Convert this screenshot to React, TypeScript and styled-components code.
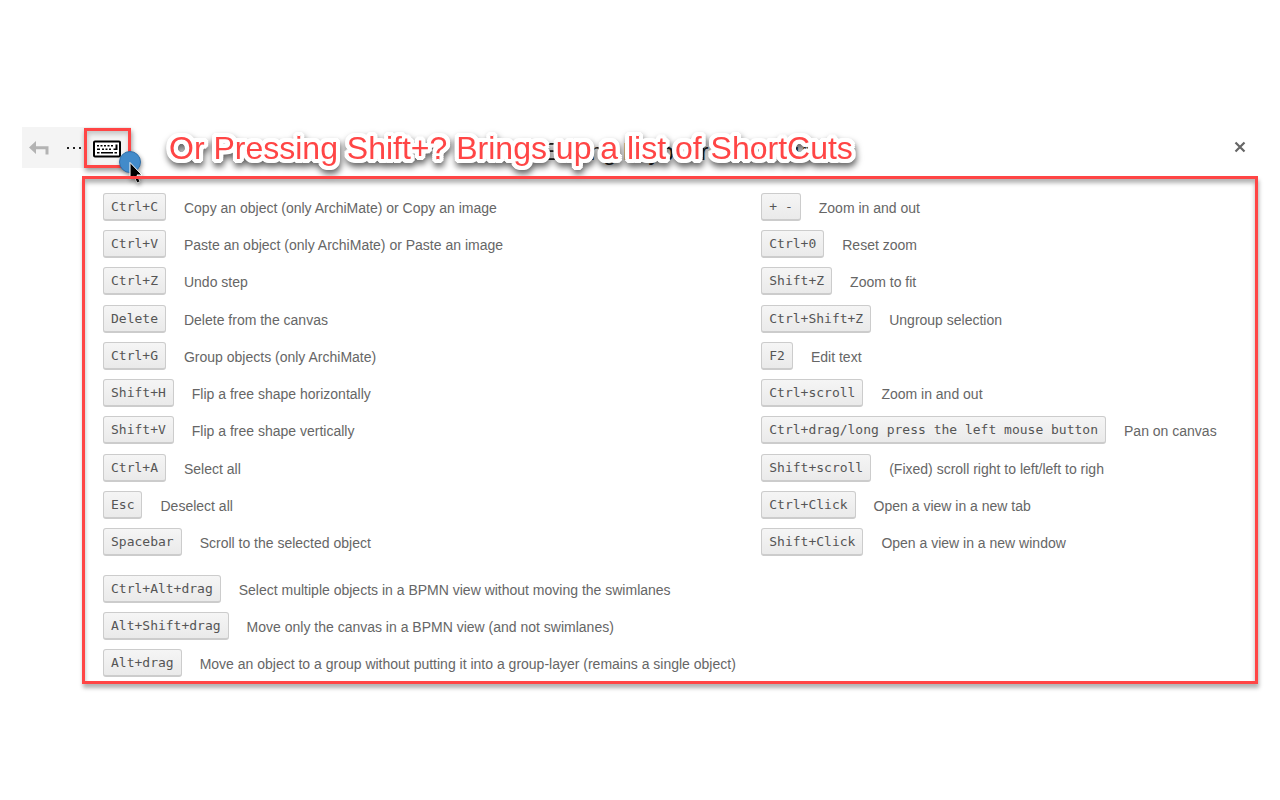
import React from "react";
import styled, { createGlobalStyle } from "styled-components";

const GlobalStyle = createGlobalStyle`
  *, *::before, *::after { box-sizing: border-box; }
  body {
    margin: 0;
    background: #fff;
    font-family: "Liberation Sans", Arial, sans-serif;
    color: #666;
  }
`;

const Page = styled.main`
  padding: 127px 22px 24px;
`;

const Header = styled.header`
  position: relative;
  display: flex;
  align-items: stretch;
  height: 41px;
  margin-bottom: 8px;
`;

const Toolbar = styled.div`
  display: flex;
  align-items: center;
  flex: none;
  width: 109px;
  background: #f4f4f4;
`;

const ToolButton = styled.button<{ $width: number }>`
  display: flex;
  align-items: center;
  justify-content: center;
  width: ${(p) => p.$width}px;
  height: 41px;
  padding: 0;
  border: 0;
  background: none;
`;

const MoreButton = styled(ToolButton)`
  justify-content: flex-end;
  padding-right: 2px;
`;

const HighlightedButton = styled(ToolButton)`
  height: 40px;
  margin-top: 1px;
  padding: 2px 2px 0 0;
  border: 3px solid #ff4545;
  box-shadow: 1px 3px 5px rgba(0, 0, 0, 0.4), inset 1px 3px 5px rgba(0, 0, 0, 0.2);
`;

const Title = styled.h1`
  flex: 1;
  margin: 0;
  padding-left: 16px;
  text-align: center;
  font-size: 24px;
  line-height: 50px;
  font-weight: 400;
  color: #222;
  white-space: nowrap;
`;

const CloseButton = styled.button`
  display: flex;
  align-items: center;
  justify-content: center;
  flex: none;
  width: 36px;
  height: 40px;
  padding: 0;
  border: 0;
  background: none;
`;

const halo = [
  "4px 0", "4px 2px", "3px 3px", "2px 4px", "0 4px", "-2px 4px", "-3px 3px", "-4px 2px",
  "-4px 0", "-4px -2px", "-3px -3px", "-2px -4px", "0 -4px", "2px -4px", "3px -3px", "4px -2px",
  "2px 0", "0 2px", "-2px 0", "0 -2px",
]
  .map((offset) => `${offset} 0 #fff`)
  .join(", ");

const Callout = styled.p`
  position: absolute;
  left: 147px;
  top: 0;
  margin: 0;
  font-size: 32px;
  line-height: 42px;
  color: #ff4545;
  white-space: nowrap;
  text-shadow: ${halo};
  filter: drop-shadow(1px 4px 3px rgba(0, 0, 0, 0.6));
`;

const Pointer = styled.svg`
  position: absolute;
  left: 94px;
  top: 21px;
  filter: drop-shadow(1px 2px 2px rgba(0, 0, 0, 0.4));
`;

const Panel = styled.section`
  position: relative;
  margin-left: 60px;
  padding: 14px 0 4px 18px;
  border: 3px solid #ff4545;
  box-shadow: 1px 4px 4px rgba(0, 0, 0, 0.3), inset 0 4px 4px rgba(0, 0, 0, 0.3);
`;

const Columns = styled.div`
  display: grid;
  grid-template-columns: 4fr 3fr;
  margin-bottom: 19px;
`;

const ShortcutList = styled.ul<{ $height?: number }>`
  display: flex;
  flex-direction: column;
  justify-content: space-between;
  gap: 9px;
  min-height: ${(p) => (p.$height ? `${p.$height}px` : "0")};
  margin: 0;
  padding: 0;
  list-style: none;
`;

const Row = styled.li`
  display: flex;
  align-items: center;
  gap: 18px;
  height: 28px;
  white-space: nowrap;
`;

const Key = styled.kbd`
  height: 28px;
  padding: 0 7px;
  border: 1px solid #ccc;
  border-bottom-width: 2px;
  border-radius: 3px;
  background: linear-gradient(#f5f5f5, #eaeaea);
  font-family: "DejaVu Sans Mono", monospace;
  font-size: 13px;
  line-height: 25px;
  color: #555;
`;

const Description = styled.span`
  padding-top: 2px;
  font-size: 14px;
  line-height: 20px;
`;

type Shortcut = [keys: string, description: string];

const general: Shortcut[] = [
  ["Ctrl+C", "Copy an object (only ArchiMate) or Copy an image"],
  ["Ctrl+V", "Paste an object (only ArchiMate) or Paste an image"],
  ["Ctrl+Z", "Undo step"],
  ["Delete", "Delete from the canvas"],
  ["Ctrl+G", "Group objects (only ArchiMate)"],
  ["Shift+H", "Flip a free shape horizontally"],
  ["Shift+V", "Flip a free shape vertically"],
  ["Ctrl+A", "Select all"],
  ["Esc", "Deselect all"],
  ["Spacebar", "Scroll to the selected object"],
];

const navigation: Shortcut[] = [
  ["+ -", "Zoom in and out"],
  ["Ctrl+0", "Reset zoom"],
  ["Shift+Z", "Zoom to fit"],
  ["Ctrl+Shift+Z", "Ungroup selection"],
  ["F2", "Edit text"],
  ["Ctrl+scroll", "Zoom in and out"],
  ["Ctrl+drag/long press the left mouse button", "Pan on canvas"],
  ["Shift+scroll", "(Fixed) scroll right to left/left to righ"],
  ["Ctrl+Click", "Open a view in a new tab"],
  ["Shift+Click", "Open a view in a new window"],
];

const dragging: Shortcut[] = [
  ["Ctrl+Alt+drag", "Select multiple objects in a BPMN view without moving the swimlanes"],
  ["Alt+Shift+drag", "Move only the canvas in a BPMN view (and not swimlanes)"],
  ["Alt+drag", "Move an object to a group without putting it into a group-layer (remains a single object)"],
];

function Shortcuts({ items, height }: { items: Shortcut[]; height?: number }) {
  return (
    <ShortcutList $height={height}>
      {items.map(([keys, description]) => (
        <Row key={keys}>
          <Key>{keys}</Key>
          <Description>{description}</Description>
        </Row>
      ))}
    </ShortcutList>
  );
}

function UndoIcon() {
  return (
    <svg width="20" height="14" viewBox="0 0 20 14">
      <path d="M0 6.500 7 0v5.200h12.500v8.300h-3V8.200H7V13Z" fill="#b3b3b3" />
    </svg>
  );
}

function DotsIcon() {
  return (
    <svg width="16" height="4" viewBox="0 0 16 4" fill="#222">
      <path d="M1 1h2v2H1zM7 1h2v2H7zM13 1h2v2h-2z" />
    </svg>
  );
}

function KeyboardIcon() {
  return (
    <svg width="28" height="18" viewBox="0 0 28 18">
      <rect x="1" y="1.500" width="26" height="15" rx="1" fill="#fff" stroke="#000" strokeWidth="2" />
      <path
        d="M4 5h2v1.500H4zM7.500 5h2v1.500h-2zM11 5h2v1.500h-2zM14.500 5h2v1.500h-2zM18 5h2v1.500h-2zM22.500 4.500H24.500v5.500h-4V8.500h2zM4 8.500h3v1.500H4zM9 8.500h2v1.500H9zM12.500 8.500h2v1.500h-2zM16 8.500h2v1.500h-2zM4 12h2.500v1.500H4zM8 12h12v1.500H8zM21.500 12H24v1.500h-2.500z"
        fill="#000"
      />
    </svg>
  );
}

export default function App() {
  return (
    <>
      <GlobalStyle />
      <Page>
        <Header>
          <Toolbar>
            <ToolButton $width={34} aria-label="Undo">
              <UndoIcon />
            </ToolButton>
            <MoreButton $width={28} aria-label="More">
              <DotsIcon />
            </MoreButton>
            <HighlightedButton $width={47} aria-label="Keyboard shortcuts">
              <KeyboardIcon />
            </HighlightedButton>
          </Toolbar>
          <Title>Editing keyboard shortcuts</Title>
          <CloseButton aria-label="Close">
            <svg width="12" height="12" viewBox="0 0 12 12">
              <path d="M1.500 1.500l9 9M10.500 1.500l-9 9" stroke="#666" strokeWidth="2.200" />
            </svg>
          </CloseButton>
          <Callout>Or Pressing Shift+? Brings up a list of ShortCuts</Callout>
          <Pointer width="30" height="38" viewBox="0 0 30 38">
            <circle cx="14" cy="14" r="10.500" fill="#428bca" stroke="#2f6fa8" />
            <path
              d="M14 14.500v17l4-3.500 3 7 3-1.300-3-6.700h5Z"
              fill="#000"
              stroke="#fff"
              strokeWidth="1"
            />
          </Pointer>
        </Header>
        <Panel aria-label="Shortcuts">
          <Columns>
            <Shortcuts items={general} height={363} />
            <Shortcuts items={navigation} height={363} />
          </Columns>
          <Shortcuts items={dragging} />
        </Panel>
      </Page>
    </>
  );
}
